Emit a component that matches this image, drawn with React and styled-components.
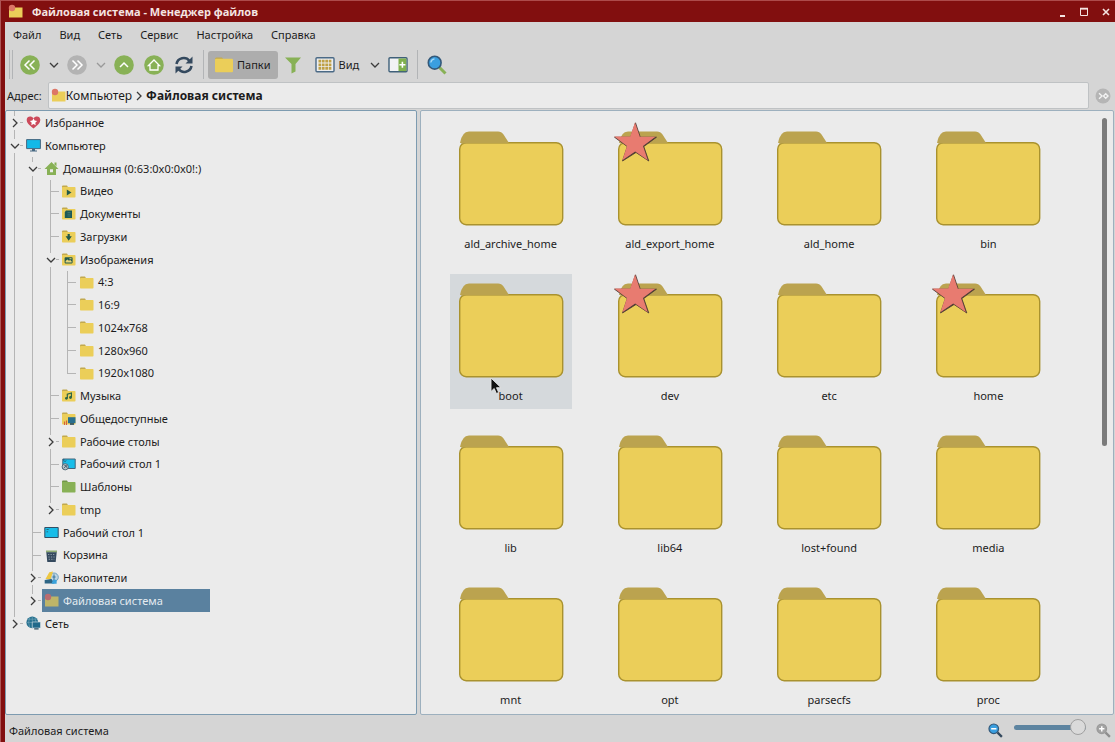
import React, { useState } from 'react';
import styled, { createGlobalStyle, css } from 'styled-components';

const GlobalStyle = createGlobalStyle`
    * {
        box-sizing: border-box;
    }
    body {
        margin: 0;
        font-family: "Noto Sans", "Open Sans", sans-serif;
        font-size: 11px;
        line-height: 18px;
        color: #1c1c1c;
    }
    button {
        font: inherit;
        color: inherit;
        background: none;
        border: 0;
        padding: 0;
        margin: 0;
    }
    svg {
        display: block;
        flex: none;
    }
`;

const Window = styled.div`
    display: flex;
    flex-direction: column;
    height: 100vh;
    overflow: hidden;
    background: #820f0f;
    border-left: 1px solid #ad5656;
    border-top: 1px solid #ad4b4b;
`;

const TitleBar = styled.header`
    display: flex;
    align-items: center;
    flex: none;
    gap: 9px;
    height: 21px;
    padding: 0 4px 0 7px;
    color: #f4e4e2;

    h1 {
        flex: 1;
        margin: 0;
        font-family: "Open Sans", sans-serif;
        font-size: 11px;
        line-height: 20px;
        font-weight: 700;
    }
`;

const WindowButtons = styled.div`
    display: flex;
    gap: 12px;
`;

const Frame = styled.div`
    display: flex;
    flex-direction: column;
    flex: 1;
    min-height: 0;
    margin-left: 4px;
    padding-right: 1px;
    background: #d5d5d5;
`;

const MenuBar = styled.nav`
    display: flex;
    align-items: center;
    flex: none;
    gap: 18px;
    height: 26px;
    padding: 0 8px;
`;

const ToolBar = styled.div`
    display: flex;
    align-items: center;
    flex: none;
    height: 33px;
    padding-left: 4px;
`;

const Handle = styled.span`
    width: 4px;
    height: 29px;
    margin-right: 2px;
    border: solid #b2b4b6;
    border-width: 0 1px;
`;

const Divider = styled.span`
    width: 1px;
    height: 29px;
    margin: 0 4px;
    background: #b2b4b6;
`;

const ToolButton = styled.button`
    display: flex;
    align-items: center;
    justify-content: center;
    gap: 4px;
    height: 28px;
    min-width: 30px;
    padding: 0 ${p => (p.$label ? '7px' : '0')};
    border-radius: 3px;
    background: ${p => (p.$pressed ? '#adadad' : 'none')};
`;

const DropButton = styled(ToolButton)`
    min-width: 17px;
`;

const AddressBar = styled.div`
    display: flex;
    align-items: center;
    flex: none;
    gap: 6px;
    height: 29px;
    padding: 0 3px 0 2px;
`;

const AddressField = styled.div`
    display: flex;
    align-items: center;
    flex: 1;
    gap: 2px;
    height: 27px;
    padding-left: 2px;
    background: #ebebeb;
    border: 1px solid #bfc2c4;
    border-radius: 2px;
    font-size: 12px;
`;

const Crumb = styled.button`
    display: flex;
    align-items: center;
    font-weight: ${p => (p.$current ? 700 : 400)};
`;

const Panes = styled.div`
    display: flex;
    flex: 1;
    gap: 3px;
    min-height: 0;
`;

const pane = css`
    background: #ebebeb;
    border: 1px solid #7d9bb0;
    border-radius: 2px;
    overflow: hidden;
`;

const TreePane = styled.aside`
    ${pane}
    flex: 0 0 412px;
`;

const FilePane = styled.main`
    ${pane}
    display: flex;
    flex: 1;
    border-color: #9db0be;
`;

const Tree = styled.ul`
    list-style: none;
    margin: 0;
    padding: 0;
`;

const TreeRow = styled.li`
    display: flex;
    height: 23px;
    white-space: nowrap;

    &:nth-child(4n) {
        height: 22px;
    }
`;

const line = '#b5b5b5';

const guides = {
    line: css`
        background: linear-gradient(${line}, ${line}) 8px 0 / 1px 100% no-repeat;
    `,
    tee: css`
        background: linear-gradient(${line}, ${line}) 8px 0 / 1px 100% no-repeat,
            linear-gradient(${line}, ${line}) 8px 11px / 9px 1px no-repeat;
    `,
    end: css`
        background: linear-gradient(${line}, ${line}) 8px 0 / 1px 12px no-repeat,
            linear-gradient(${line}, ${line}) 8px 11px / 9px 1px no-repeat;
    `,
};

const Guide = styled.span`
    display: flex;
    align-items: center;
    justify-content: center;
    flex: none;
    width: 18px;
    ${p => guides[p.$kind]}

    &:nth-child(3) {
        width: 17px;
    }
`;

const Expander = styled.button`
    display: flex;
    align-items: center;
    justify-content: center;
    width: 10px;
    height: 14px;
    background: #ebebeb;
`;

const TreeLabel = styled.button`
    display: flex;
    align-items: center;
    gap: 4px;
    padding: 0 2px;
    ${p => p.$selected && css`
        width: 168px;
        background: #5a819f;
        color: #e4ebf0;
    `}
`;

const FileGrid = styled.div`
    flex: 1;
    display: grid;
    grid-template-columns: repeat(auto-fill, minmax(150px, 1fr));
    grid-auto-rows: 135px;
    row-gap: 17px;
    justify-items: center;
    padding: 11px 31px 0 10px;
    overflow: hidden;
`;

const FileItem = styled.button`
    position: relative;
    display: flex;
    flex-direction: column;
    align-items: center;
    width: 122px;
    background: ${p => (p.$hover ? '#d5d9dc' : 'none')};
`;

const Pointer = styled.svg`
    position: absolute;
    left: 40px;
    top: 103px;
`;

const ScrollTrack = styled.div`
    flex: none;
    width: 14px;
    padding: 7px 0 0 3px;
`;

const ScrollThumb = styled.div`
    width: 5px;
    height: 55%;
    border-radius: 3px;
    background: #7b7b7b;
`;

const StatusBar = styled.footer`
    display: flex;
    align-items: center;
    flex: none;
    height: 27px;
    padding: 4px 3px 0 4px;

    p {
        flex: 1;
        margin: 0;
    }
`;

const ZoomSlider = styled.input`
    appearance: none;
    width: 72px;
    height: 16px;
    margin: 0 10px 6px 11px;
    background: none;

    &::-webkit-slider-runnable-track {
        height: 5px;
        border-radius: 3px;
        background: #5d84a0;
    }
    &::-webkit-slider-thumb {
        appearance: none;
        width: 16px;
        height: 16px;
        margin-top: -6px;
        border: 1px solid #a0a0a0;
        border-radius: 50%;
        background: #dadada;
    }
`;

const Chevron = ({ down, color = '#3c3c3c' }) => (
    <svg width="10" height="10" viewBox="0 0 10 10" fill="none" stroke={color} strokeWidth="1.3">
        <path d={down ? 'M1 3l4 4 4-4' : 'M3 1l4 4-4 4'} />
    </svg>
);

const Circle = ({ color = '#88b156', children }) => (
    <svg width="20" height="20" viewBox="0 0 20 20" fill="none" stroke="#fff" strokeWidth="1.5">
        <circle cx="10" cy="10" r="9.8" fill={color} stroke="none" />
        {children}
    </svg>
);

const FolderIcon = ({ color = '#ebce59', tab = '#c2a94e', children }) => (
    <svg width="15" height="15" viewBox="0 0 15 15">
        <path d="M1 4V2.5Q1 1.5 2 1.5H6L7.5 4Z" fill={tab} />
        <rect x="1" y="3" width="13.5" height="10.5" rx=".7" fill={color} />
        {children}
    </svg>
);

const RootIcon = ({ dim }) => (
    <svg width="15" height="15" viewBox="0 0 15 15">
        <path d="M1 3.5h13.5v10H1z" fill={dim ? '#bfb568' : '#ebce59'} />
        <circle cx="4" cy="4" r="3.2" fill={dim ? '#b96c70' : '#dd7767'} />
    </svg>
);

const icons = {
    heart: (
        <svg width="15" height="15" viewBox="0 0 15 15">
            <path d="M7.5 13.5C3 10 .7 7.8.7 4.8c0-4 4.8-4.4 6.8-1.6 2-2.8 6.8-2.4 6.8 1.6 0 3-2.3 5.2-6.8 8.7z" fill="#cc4a5b" />
            <path d="M7.5 3.3l1.1 2.3 2.5.3-1.8 1.8.4 2.5-2.2-1.2-2.2 1.2.4-2.5-1.8-1.8 2.5-.3z" fill="#fff" />
        </svg>
    ),
    computer: (
        <svg width="15" height="15" viewBox="0 0 15 15">
            <path d="M.6 1.6h13.8v9H.6z" fill="#12b9e8" stroke="#456781" />
            <path d="M6 11h3v1.6h2v1H4v-1h2z" fill="#456781" />
        </svg>
    ),
    home: (
        <svg width="15" height="15" viewBox="0 0 15 15">
            <path fillRule="evenodd" d="M7.5 1L14.5 8H12v6H3V8H.5zM6 8.2v3h3v-3z" fill="#88b156" />
            <path d="M10.5 1.5h2v4l-2-2z" fill="#88b156" />
        </svg>
    ),
    video: <FolderIcon><path d="M5.8 5.5v6L10.5 8.5z" fill="#225a4b" /></FolderIcon>,
    docs: (
        <FolderIcon>
            <path d="M5 4.5h6V12H3.8V6z" fill="#1c5a57" />
            <path d="M6.5 6.5h3M6.5 8.2h3M6.5 10h3" stroke="#4f8078" strokeWidth=".7" />
        </FolderIcon>
    ),
    download: <FolderIcon><path d="M6.6 5h2.2v2.3h2L7.7 11.8 4.6 7.3h2z" fill="#225a4b" /></FolderIcon>,
    image: (
        <FolderIcon>
            <rect x="3.6" y="5.2" width="8" height="6.2" rx=".8" fill="#225a4b" />
            <path d="M4.6 10.4V9l1.8-1.6 1.6 1.4 1.2-.8 1.5 1.4v1zM8.5 6.2h2v1h-2z" fill="#e4d479" />
        </FolderIcon>
    ),
    folder: <FolderIcon />,
    green: <FolderIcon color="#88b156" tab="#719648" />,
    music: (
        <FolderIcon>
            <path d="M6.3 10V6.2L10.4 5v4.2" fill="none" stroke="#2b6545" strokeWidth="1.2" />
            <circle cx="5.4" cy="10.3" r="1.4" fill="#2b6545" />
            <circle cx="9.5" cy="9.5" r="1.4" fill="#2b6545" />
        </FolderIcon>
    ),
    shared: (
        <FolderIcon>
            <path d="M7 6.2h7.5v6H7z" fill="#286f8e" />
            <path d="M9 12.2h4v1.6H9z" fill="#23485f" />
            <path d="M3.5 10.5v3.500M5.5 9.500v4.500" stroke="#d4603b" strokeWidth="1.1" fill="none" />
        </FolderIcon>
    ),
    desktop: (
        <svg width="15" height="15" viewBox="0 0 15 15">
            <path d="M.8 2.5h13.4v10H.8z" fill="#18bde9" stroke="#314f66" />
            <path d="M2.5 4.5h1.6M2.5 6.8h1.6M5 3.8l-1 1" stroke="#256e7f" />
        </svg>
    ),
    desktopLink: (
        <svg width="15" height="15" viewBox="0 0 15 15">
            <path d="M1.8 2h12.4v9.5H1.8z" fill="#18bde9" stroke="#42647b" />
            <path d="M2 3h1.5M5 3.5L3.5 5" stroke="#284f63" />
            <circle cx="4.2" cy="9.8" r="3.1" fill="#b9c3c9" stroke="#536a79" />
            <path d="M2.7 11.3l2.7-2.7M3.3 8.6h2.1v2.1" stroke="#536a79" fill="none" />
        </svg>
    ),
    trash: (
        <svg width="15" height="15" viewBox="0 0 15 15">
            <path d="M2 2.5h11v2H2z" fill="#8eab72" />
            <path d="M2.3 4.2h10.4l-1 9.8H3.3z" fill="#34495e" />
            <path d="M4 6.5h7M4.4 9h6.2M4.7 11.3h5.6" stroke="#8b99a6" strokeDasharray="1.3 1.2" />
        </svg>
    ),
    drives: (
        <svg width="15" height="15" viewBox="0 0 15 15">
            <circle cx="10" cy="7.3" r="4.3" fill="#bdd3e1" stroke="#6e9fbd" />
            <path d="M10 4.5v5.5M8.4 7h3.2" stroke="#36759c" />
            <path d="M1.5 9L5.3 2.2 9 1.5 6.5 9.5z" fill="#edc742" />
            <path d="M.7 10l6.8-1 3 4.5H.7z" fill="#2d6585" />
            <path d="M9 9.8h3.6v4H7.5z" fill="#39a1db" />
        </svg>
    ),
    root: <RootIcon />,
    rootDim: <RootIcon dim />,
    network: (
        <svg width="15" height="15" viewBox="0 0 15 15">
            <circle cx="6.3" cy="6.4" r="5.9" fill="#26708f" />
            <path d="M.7 6.4h11M6.3.6v11M2 3.2h8.6M3.7 1.5Q1.5 6.4 3.7 11.3M8.9 1.5Q11 6.4 8.9 11.3" stroke="#75a7ba" strokeWidth=".6" fill="none" />
            <path d="M6.3 6h8.2v6H6.3z" fill="#21698a" stroke="#d8e3e7" strokeWidth=".6" />
            <path d="M8.2 12.2h4.4v1.3H8.2z" fill="#2b4c60" />
        </svg>
    ),
};

const Magnifier = ({ size = 20, glass = '#3a9fe0', ring = '#34597a', handle = '#88b156', sign }) => (
    <svg width={size} height={size} viewBox="0 0 20 20" fill="none">
        <path d="M12.5 12.5L18.5 18.5" stroke={handle} strokeWidth="3" />
        <circle cx="7.7" cy="7.7" r="6.4" fill={glass} stroke={ring} strokeWidth="1.6" />
        {sign ? (
            <path d={sign === 'plus' ? 'M4.2 7.7h7M7.7 4.2v7' : 'M4.2 7.7h7'} stroke="#fff" strokeWidth="2" />
        ) : (
            <path d="M3.8 7.5Q4.3 4.3 7.5 3.8" stroke="#a5d8f5" strokeWidth="1.3" />
        )}
    </svg>
);

const BigFolder = ({ starred }) => (
    <svg width="122" height="113" viewBox="0 0 122 113">
        <path d="M10 21Q12 9.500 19 9.500H48Q51.500 9.500 53.500 12.500L59 21Z" fill="#bba34f" />
        <rect x="9.700" y="20.700" width="103" height="82" rx="6.500" fill="#ebce59" stroke="#a9922f" strokeWidth="1.400" />
        <path d="M11 20H58.500V21.500H11Z" fill="#bba34f" />
        {starred && (
            <g strokeLinejoin="round">
                <path d="M26.500 .8L31.300 15.200H47.500L34.800 24.600L39.800 39L27 30.500L13.500 39L18.300 24.600L5.500 15.200H21.700Z" fill="#4d3a34" stroke="#4d3a34" strokeWidth=".8" />
                <path d="M26 .5L30.800 14.700H46.500L34 23.900L38.800 38.200L26.200 29.600L13.400 38.200L18 23.900L5.200 14.500H21.200Z" fill="#e87b70" />
            </g>
        )}
    </svg>
);

const menu = ['Файл', 'Вид', 'Сеть', 'Сервис', 'Настройка', 'Справка'];

const tree = [
    { name: 'Избранное', icon: 'heart', closed: true },
    {
        name: 'Компьютер',
        icon: 'computer',
        items: [
            {
                name: 'Домашняя (0:63:0x0:0x0!:)',
                icon: 'home',
                items: [
                    { name: 'Видео', icon: 'video' },
                    { name: 'Документы', icon: 'docs' },
                    { name: 'Загрузки', icon: 'download' },
                    {
                        name: 'Изображения',
                        icon: 'image',
                        items: [
                            { name: '4:3', icon: 'folder' },
                            { name: '16:9', icon: 'folder' },
                            { name: '1024x768', icon: 'folder' },
                            { name: '1280x960', icon: 'folder' },
                            { name: '1920x1080', icon: 'folder' },
                        ],
                    },
                    { name: 'Музыка', icon: 'music' },
                    { name: 'Общедоступные', icon: 'shared' },
                    { name: 'Рабочие столы', icon: 'folder', closed: true },
                    { name: 'Рабочий стол 1', icon: 'desktopLink' },
                    { name: 'Шаблоны', icon: 'green' },
                    { name: 'tmp', icon: 'folder', closed: true },
                ],
            },
            { name: 'Рабочий стол 1', icon: 'desktop' },
            { name: 'Корзина', icon: 'trash' },
            { name: 'Накопители', icon: 'drives', closed: true },
            { name: 'Файловая система', icon: 'root', closed: true },
        ],
    },
    { name: 'Сеть', icon: 'network', closed: true },
];

const files = [
    { name: 'ald_archive_home' },
    { name: 'ald_export_home', starred: true },
    { name: 'ald_home' },
    { name: 'bin' },
    { name: 'boot', hover: true },
    { name: 'dev', starred: true },
    { name: 'etc' },
    { name: 'home', starred: true },
    { name: 'lib' },
    { name: 'lib64' },
    { name: 'lost+found' },
    { name: 'media' },
    { name: 'mnt' },
    { name: 'opt' },
    { name: 'parsecfs' },
    { name: 'proc' },
];

// turns the nested tree into rows, each with the guide lines of its ancestors
const flatten = (nodes, parents = [], path = '') =>
    nodes.flatMap((node, i) => {
        const last = i === nodes.length - 1;
        const id = `${path}/${node.name}`;
        const row = { ...node, id, guides: [...parents, last ? 'end' : 'tee'] };
        const below = node.items ? flatten(node.items, [...parents, last ? 'none' : 'line'], id) : [];
        return [row, ...below];
    });

const rows = flatten(tree);

const App = () => {
    const [selected, setSelected] = useState('/Компьютер/Файловая система');
    const [showFolders, setShowFolders] = useState(true);

    return (
        <Window>
            <GlobalStyle />
            <TitleBar>
                <RootIcon />
                <h1>Файловая система - Менеджер файлов</h1>
                <WindowButtons>
                    <button aria-label="Свернуть">
                        <svg width="9" height="10" viewBox="0 0 9 10"><path d="M2 8h5v2H2z" fill="#f4e4e2" /></svg>
                    </button>
                    <button aria-label="Развернуть">
                        <svg width="10" height="10" viewBox="0 0 10 10" fill="none" stroke="#f4e4e2">
                            <path d="M1.500 2h7v6.500h-7z" />
                            <path d="M1 1.500h8" strokeWidth="1.500" />
                        </svg>
                    </button>
                    <button aria-label="Закрыть">
                        <svg width="10" height="10" viewBox="0 0 10 10" stroke="#f4e4e2" strokeWidth="1.600">
                            <path d="M2 2l6 6M8 2L2 8" />
                        </svg>
                    </button>
                </WindowButtons>
            </TitleBar>
            <Frame>
                <MenuBar>
                    {menu.map(item => <button key={item}>{item}</button>)}
                </MenuBar>
                <ToolBar>
                    <Handle />
                    <ToolButton aria-label="Назад">
                        <Circle><path d="M9.500 5.500L5 10l4.500 4.500M14.500 5.500L10 10l4.500 4.500" /></Circle>
                    </ToolButton>
                    <DropButton aria-label="История назад"><Chevron down /></DropButton>
                    <ToolButton aria-label="Вперёд">
                        <Circle color="#b3b3b3"><path d="M5.500 5.500L10 10l-4.500 4.500M10.500 5.500L15 10l-4.500 4.500" /></Circle>
                    </ToolButton>
                    <DropButton aria-label="История вперёд"><Chevron down color="#999" /></DropButton>
                    <ToolButton aria-label="Вверх">
                        <Circle><path d="M6 12l4-4 4 4" /></Circle>
                    </ToolButton>
                    <ToolButton aria-label="Домой">
                        <Circle><path d="M4.500 10.500L10 5l5.500 5.500H14V15H6v-4.500z" strokeWidth="1.300" /></Circle>
                    </ToolButton>
                    <ToolButton aria-label="Обновить">
                        <svg width="20" height="20" viewBox="0 0 20 20" fill="none" stroke="#34495e" strokeWidth="2.600">
                            <path d="M2.500 9A7.300 7.300 0 0 1 15.500 6" />
                            <path d="M17.500 11A7.300 7.300 0 0 1 4.500 14" />
                            <path d="M18.500 1.500v7H11.500zM1.500 18.500v-7H8.500z" fill="#34495e" stroke="none" />
                        </svg>
                    </ToolButton>
                    <Divider />
                    <ToolButton $label $pressed={showFolders} onClick={() => setShowFolders(!showFolders)}>
                        <svg width="18" height="18" viewBox="0 0 18 18">
                            <path d="M0 4V3q0-1.500 1.500-1.500H7L9 4z" fill="#c2a94e" />
                            <rect y="2.800" width="18" height="13.500" rx="1" fill="#ebce59" />
                        </svg>
                        Папки
                    </ToolButton>
                    <ToolButton aria-label="Фильтр">
                        <svg width="18" height="18" viewBox="0 0 18 18">
                            <path d="M1 1.500h16L11.500 8v7.500l-4 2V8z" fill="#88b156" />
                        </svg>
                    </ToolButton>
                    <ToolButton $label>
                        <svg width="20" height="18" viewBox="0 0 20 18">
                            <rect x="1" y="1.800" width="18" height="14" rx="1" fill="#edeef0" stroke="#4b6a86" strokeWidth="1.400" />
                            <path d="M3.500 5.200h13M3.500 8.800h13M3.500 12.400h13" stroke="#bfa045" strokeWidth="2.700" strokeDasharray="2.700 .7" />
                        </svg>
                        Вид
                    </ToolButton>
                    <DropButton aria-label="Режим просмотра"><Chevron down /></DropButton>
                    <ToolButton aria-label="Добавить панель">
                        <svg width="20" height="18" viewBox="0 0 20 18">
                            <rect x="1" y="1.800" width="18" height="14" rx="1" fill="#f2f3f4" stroke="#3f6079" strokeWidth="1.400" />
                            <path d="M10.500 2.500h7.800v12.600h-7.800z" fill="#7fb04c" />
                            <path d="M14.400 5.800v6M11.400 8.800h6" stroke="#fff" strokeWidth="1.600" />
                        </svg>
                    </ToolButton>
                    <Divider />
                    <ToolButton aria-label="Поиск"><Magnifier /></ToolButton>
                </ToolBar>
                <AddressBar>
                    <span>Адрес:</span>
                    <AddressField>
                        <Crumb><RootIcon />Компьютер</Crumb>
                        <Chevron />
                        <Crumb $current>Файловая система</Crumb>
                    </AddressField>
                    <button aria-label="Перейти">
                        <svg width="16" height="16" viewBox="0 0 16 16" fill="none" stroke="#f2f2f2" strokeWidth="1.400">
                            <circle cx="8" cy="8" r="7.500" fill="#b5b5b5" stroke="none" />
                            <path d="M4 5.200L7 8l-3 2.800M8.500 8l2.200-2.200L13 8l-2.300 2.200z" />
                        </svg>
                    </button>
                </AddressBar>
                <Panes>
                    {showFolders && (
                        <TreePane>
                            <Tree>
                                {rows.map(row => {
                                    const active = row.id === selected;
                                    const last = row.guides.length - 1;
                                    return (
                                        <TreeRow key={row.id}>
                                            {row.guides.map((kind, i) => (
                                                <Guide key={i} $kind={kind}>
                                                    {i === last && (row.items || row.closed) && (
                                                        <Expander aria-label={`Раскрыть ${row.name}`}>
                                                            <Chevron down={!!row.items} />
                                                        </Expander>
                                                    )}
                                                </Guide>
                                            ))}
                                            <TreeLabel $selected={active} onClick={() => setSelected(row.id)}>
                                                {active && row.icon === 'root' ? icons.rootDim : icons[row.icon]}
                                                {row.name}
                                            </TreeLabel>
                                        </TreeRow>
                                    );
                                })}
                            </Tree>
                        </TreePane>
                    )}
                    <FilePane>
                        <FileGrid>
                            {files.map(file => (
                                <FileItem key={file.name} $hover={file.hover}>
                                    <BigFolder starred={file.starred} />
                                    {file.name}
                                    {file.hover && (
                                        <Pointer width="12" height="18" viewBox="0 0 12 18">
                                            <path d="M1 1v13.500l3.200-3 2.200 5 2.300-1-2.200-4.800H11z" fill="#111" stroke="#e6e6e6" strokeWidth=".9" />
                                        </Pointer>
                                    )}
                                </FileItem>
                            ))}
                        </FileGrid>
                        <ScrollTrack>
                            <ScrollThumb />
                        </ScrollTrack>
                    </FilePane>
                </Panes>
                <StatusBar>
                    <p>Файловая система</p>
                    <button aria-label="Уменьшить"><Magnifier size={15} handle="#34495e" sign="minus" /></button>
                    <ZoomSlider type="range" aria-label="Размер значков" min="0" max="100" defaultValue="100" />
                    <button aria-label="Увеличить">
                        <Magnifier size={15} glass="#a3a3a3" ring="#9a9a9a" handle="#8e8e8e" sign="plus" />
                    </button>
                </StatusBar>
            </Frame>
        </Window>
    );
};

export default App;
